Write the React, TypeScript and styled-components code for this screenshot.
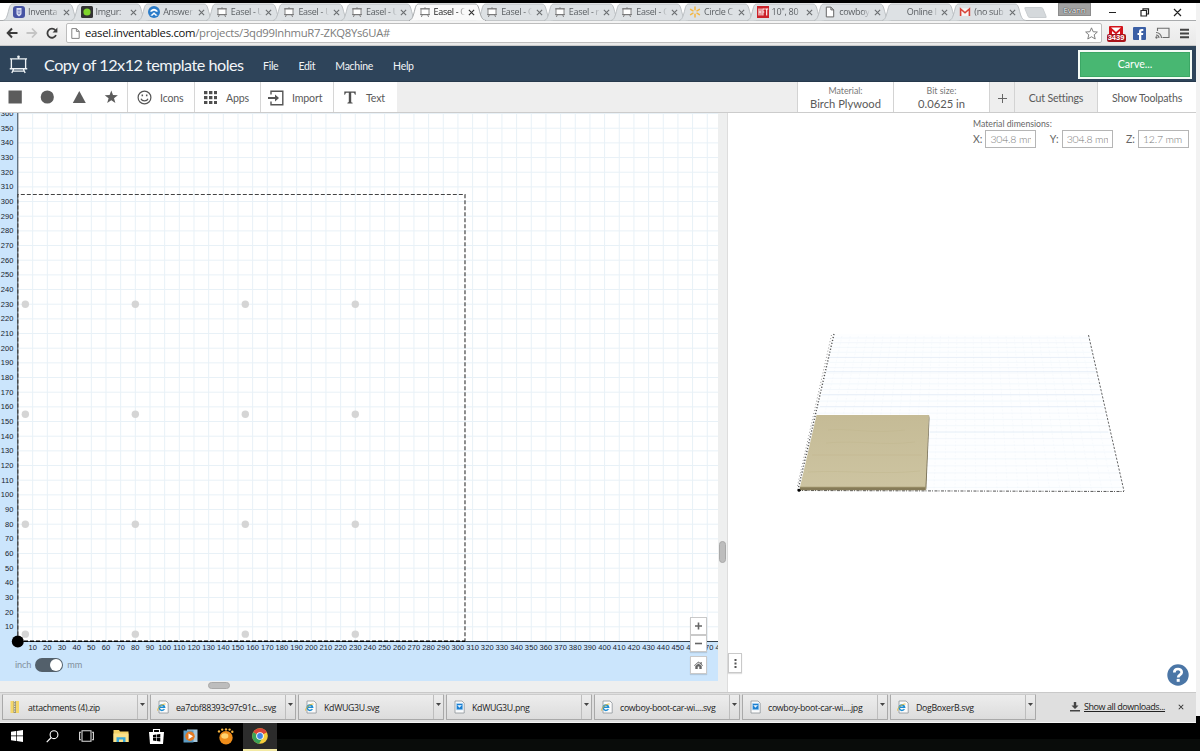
import React from "react";
import styled, { createGlobalStyle } from "styled-components";

const UI = '"Open Sans", "Noto Sans", sans-serif';
const LATO = 'Lato, "Open Sans", sans-serif';

const GlobalStyle = createGlobalStyle`
  * { box-sizing: border-box; }
  body { margin: 0; background: #000; font-family: ${LATO}; overflow: hidden; }
  svg { display: block; flex: none; }
  button { font: inherit; padding: 0; margin: 0; border: 0; background: none; color: inherit; }
`;

const Screen = styled.div`
  width: 1200px;
  height: 751px;
  padding-top: 9px;
  background: linear-gradient(#000 0 3px, #f2f2f2 3px 716px, #000 716px);
`;

const Window = styled.div`
  width: 1196px;
  height: 748px;
  display: flex;
  flex-direction: column;
  margin-top: -6px;
`;

/* ---------- browser chrome ---------- */

const TabStrip = styled.div`
  height: 18px;
  flex: none;
  display: flex;
  background: #fff;
  padding-left: 3px;
  border-bottom: 1px solid #a9abad;
`;

const Tab = styled.div<{ $active?: boolean }>`
  position: relative;
  z-index: ${(p) => (p.$active ? 2 : 1)};
  width: 67.6px;
  height: 18px;
  flex: none;
  display: flex;
  align-items: center;
  padding-left: 10px;
  color: ${(p) => (p.$active ? "#222" : "#5c6064")};
  font: ${(p) => (p.$active ? 500 : 400)} 9px/18px ${UI};
  letter-spacing: -0.3px;
`;

const TabShape = styled.svg`
  position: absolute;
  left: 0;
  top: 0;
  z-index: -1;
`;

const TabTitle = styled.span`
  width: 31px;
  margin-left: 3px;
  overflow: hidden;
  white-space: nowrap;
  mask-image: linear-gradient(90deg, #000 75%, transparent);
`;

const TabClose = styled.svg`
  margin-left: 3.5px;
`;

const NewTab = styled.div`
  width: 19px;
  height: 11px;
  margin: 4px 0 0 9px;
  background: #d5d9dc;
  border: 1px solid #c9cdd0;
  border-radius: 2px;
  transform: skewX(22deg);
`;

const WindowControls = styled.div`
  margin-left: auto;
  display: flex;
  align-items: flex-start;
`;

const UserBadge = styled.div`
  width: 33px;
  height: 13px;
  background: #a2a2a2;
  border: 1px solid #8c8c8c;
  color: #fff;
  font: 8px/11px ${UI};
  letter-spacing: -0.1px;
  text-align: center;
  text-shadow: 0 0 1px #222, 0 0 1px #222;
`;

const AddressBar = styled.div`
  height: 25px;
  flex: none;
  display: flex;
  align-items: center;
  background: linear-gradient(#f4f4f4, #e9e9e9);
  border-bottom: 1px solid #c9c9c9;
  padding: 0 6px 0 6px;
`;

const NavButtons = styled.div`
  display: flex;
  gap: 8px;
  width: 60px;
  align-items: center;
`;

const Omnibox = styled.div`
  flex: 1;
  height: 20px;
  display: flex;
  align-items: center;
  background: #fff;
  border: 1px solid #bdbdbd;
  border-radius: 2px;
  padding: 0 3px 0 4px;
`;

const Url = styled.span`
  flex: 1;
  margin-left: 5px;
  color: #7c7c7c;
  font: 11.3px/18px ${UI};
  letter-spacing: -0.29px;
  b { font-weight: 400; color: #111; }
`;

const Extensions = styled.div`
  display: flex;
  align-items: center;
  gap: 9px;
  padding-left: 4px;
`;

const MailExtension = styled.div`
  width: 20px;
  height: 17px;
  margin: 2px -2px 0 0;
  display: flex;
  flex-direction: column;
  align-items: center;
`;

const MailCount = styled.span`
  width: 19px;
  height: 8px;
  margin-top: -3px;
  border-radius: 2px;
  background: #a8131b;
  color: #fff;
  font: 700 7.5px/8px "Liberation Sans", sans-serif;
  text-align: center;
`;

/* ---------- application header ---------- */

const AppHeader = styled.header`
  height: 36px;
  flex: none;
  display: flex;
  align-items: center;
  background: #2e445a;
  border-bottom: 1px solid #26394c;
  color: #f2f5f8;
  padding: 1px 4px 0 9px;
`;

const ProjectTitle = styled.h1`
  margin: 1px 0 0 16px;
  width: 219px;
  white-space: nowrap;
  font: 400 16.2px/22px ${LATO};
  letter-spacing: -0.5px;
`;

const MenuBar = styled.nav`
  display: flex;
  gap: 20px;
  margin-top: 4px;
  font: 10.5px/14px ${LATO};
  letter-spacing: -0.27px;
`;

const CarveButton = styled.button`
  margin-left: auto;
  width: 114px;
  height: 29px;
  background: #48b772;
  border: 2px solid #f4fbf6;
  box-shadow: inset 0 0 0 1px #3ba765;
  color: #fff;
  font: 10.6px/25px ${LATO};
`;

const Toolbar = styled.div`
  height: 31px;
  flex: none;
  display: flex;
  background: #eee;
  border-bottom: 1px solid #ccc;
  color: #5a5a5a;
`;

const ShapeTools = styled.div`
  width: 127px;
  display: flex;
  align-items: center;
  gap: 18px;
  padding-left: 8px;
  background: #fff;
`;

const Tool = styled.button<{ $width: number; $inset: number; $gap: number }>`
  width: ${(p) => p.$width}px;
  display: flex;
  align-items: center;
  padding: 1px 0 0 ${(p) => p.$inset}px;
  gap: ${(p) => p.$gap}px;
  background: #fff;
  border-left: 1px solid #d6d6d6;
  font: 10.6px/14px ${LATO};
  letter-spacing: -0.15px;
`;

const ToolbarEnd = styled.div`
  display: flex;
  margin-left: auto;
`;

const Setting = styled.div<{ $width: number; $muted?: boolean }>`
  width: ${(p) => p.$width}px;
  display: flex;
  flex-direction: column;
  align-items: center;
  justify-content: center;
  padding-top: 2px;
  background: ${(p) => (p.$muted ? "#eee" : "#fff")};
  border-left: 1px solid #d3d3d3;
  font: 10.6px/13px ${LATO};
  letter-spacing: -0.2px;
  small { font-size: 8.8px; line-height: 12px; color: #777; letter-spacing: 0; }
  strong { font-weight: 400; font-size: 11.2px; line-height: 14px; letter-spacing: 0; }
`;

/* ---------- workspace ---------- */

const Workspace = styled.main`
  height: 579px;
  flex: none;
  display: flex;
`;

const Design = styled.section`
  position: relative;
  width: 728px;
  display: grid;
  grid-template-columns: 718px 10px;
  grid-template-rows: 568px 11px;
  background: #eeefef;
  border-right: 1px solid #ddd;
`;

const VerticalTrack = styled.div`
  padding: 428px 1px 0 1px;
`;

const HorizontalTrack = styled.div`
  padding: 1px 0 0 208px;
`;

const Thumb = styled.div<{ $w: number; $h: number }>`
  width: ${(p) => p.$w}px;
  height: ${(p) => p.$h}px;
  border-radius: 4px;
  background: #bdbdbd;
  border: 1px solid #a8a8a8;
`;

const RulerText = styled.text`
  font: 7.5px "Liberation Sans", sans-serif;
  letter-spacing: 0.1px;
  fill: #17232e;
`;

const UnitSwitch = styled.div`
  position: absolute;
  left: 15px;
  bottom: 20px;
  display: flex;
  align-items: center;
  gap: 4px;
  color: #83919d;
  font: 9.2px/14px ${LATO};
  letter-spacing: -0.15px;
`;

const Switch = styled.span`
  width: 28px;
  height: 14px;
  padding: 1px;
  border-radius: 7px;
  background: #53606b;
  display: flex;
  justify-content: flex-end;
  &::after {
    content: "";
    width: 12px;
    height: 12px;
    border-radius: 50%;
    background: #fff;
  }
`;

const ZoomControls = styled.div`
  position: absolute;
  left: 690px;
  top: 504px;
  display: flex;
  flex-direction: column;
`;

const SquareButton = styled.button<{ $gap?: number; $h?: number }>`
  width: 17px;
  height: ${(p) => p.$h ?? 17}px;
  margin-top: ${(p) => p.$gap ?? 0}px;
  display: flex;
  align-items: center;
  justify-content: center;
  background: #fff;
  border: 1px solid #c9c9c9;
  box-shadow: 0 1px 1px rgba(0, 0, 0, 0.12);
  color: #666;
`;

const Preview = styled.section`
  position: relative;
  flex: 1;
  background: #fff;
`;

const Dimensions = styled.div`
  height: 41px;
  padding: 5px 7px 0 245px;
  color: #666;
  font: 8.7px/12px ${LATO};
`;

const DimensionRow = styled.div`
  display: flex;
  justify-content: space-between;
`;

const Dimension = styled.label`
  display: flex;
  align-items: center;
  gap: 3px;
  font: 10.5px/17px ${LATO};
`;

const DimensionValue = styled.span`
  width: 51px;
  height: 18px;
  border: 1px solid #b5b5b5;
  padding: 0 4px;
  color: #777;
  font: 300 10.5px/17px ${LATO};
  letter-spacing: -0.2px;
  white-space: nowrap;
  background: #fff;
`;

const Clip = styled.span`
  display: block;
  overflow: hidden;
`;

const MoreButton = styled(SquareButton)`
  position: absolute;
  left: 0;
  top: 540px;
  width: 14px;
  height: 20px;
`;

const HelpButton = styled.button`
  position: absolute;
  right: 7px;
  top: 551px;
  width: 22px;
  height: 22px;
`;

/* ---------- downloads and taskbar ---------- */

const Downloads = styled.div`
  height: 31px;
  flex: none;
  display: flex;
  align-items: center;
  gap: 2px;
  padding: 0 0 1px 2px;
  background: #dfdfdf;
  border-top: 1px solid #c9c9c9;
  border-bottom: 1px solid #f4f4f4;
  color: #222;
  font: 8.8px/14px ${UI};
  letter-spacing: -0.32px;
`;

const Download = styled.div`
  width: 146px;
  height: 26px;
  display: flex;
  align-items: center;
  padding-left: 6px;
  background: linear-gradient(#ededed, #dcdcdc);
  border: 1px solid #a9a9a9;
  border-top-color: #ccc;
  border-radius: 1px;
`;

const FileName = styled.span`
  flex: 1;
  margin-left: 7px;
  padding-top: 1px;
  white-space: nowrap;
`;

const DownloadMenu = styled.span`
  width: 10px;
  height: 24px;
  padding: 8px 0 0 2px;
  border-left: 1px solid #bdbdbd;
`;

const ShowAll = styled.span`
  display: flex;
  align-items: center;
  gap: 4px;
  margin-left: 32px;
  width: 106px;
  white-space: nowrap;
  u { font-size: 9px; letter-spacing: -0.43px; }
`;

const Taskbar = styled.footer`
  width: 1200px;
  height: 29px;
  flex: none;
  display: flex;
  background: linear-gradient(#000 0 16px, #090c0a 16px);
`;

const TaskItem = styled.div<{ $active?: boolean }>`
  width: ${(p) => (p.$active ? 34.5 : 34.7)}px;
  height: 28px;
  display: flex;
  align-items: center;
  justify-content: center;
  background: ${(p) => (p.$active ? "#2c2c2c" : "#000")};
  border-bottom: 2px solid ${(p) => (p.$active ? "#f3eaa4" : "#000")};
`;

/* ---------- icons ---------- */

const EaselIcon = ({ size, color, weight = 1.4 }: { size: number; color: string; weight?: number }) => (
  <svg width={size} height={size} viewBox="0 0 20 20" fill="none" stroke={color} strokeWidth={weight}>
    <path d="M1 4H19M2.5 4V14.5H17.5V4M.8 14.5H19.2M5 14.5L3 19M15 14.5L17 19M4 17H16M10 4V1.5" />
    <circle cx="10" cy="1.8" r=".7" fill={color} />
  </svg>
);

const PageIcon = ({ width = 9, height = 11 }: { width?: number; height?: number }) => (
  <svg width={width} height={height} viewBox="0 0 9 11" fill="#fff" stroke="#777" strokeWidth=".9">
    <path d="M.8.6H5.4L8.2 3.4V10.4H.8ZM5.4.6V3.4H8.2" />
  </svg>
);

const CloseX = ({ size = 7, color = "#6b6e71" }: { size?: number; color?: string }) => (
  <svg width={size} height={size} viewBox="0 0 8 8" stroke={color} strokeWidth="1.4">
    <path d="M1 1L7 7M7 1L1 7" />
  </svg>
);

const favicons: Record<string, React.ReactNode> = {
  inventables: (
    <svg width="12" height="12" viewBox="0 0 12 12">
      <rect width="12" height="12" rx="3" fill="#4653a3" />
      <path d="M3.5 2H8.5V7.5C8.5 9 7 9.5 6 10.5C5 9.5 3.5 9 3.5 7.5Z" fill="#dfe4f6" />
      <path d="M4.5 4.3H7.5M4.5 6H7.5M4.8 7.7H7.2" stroke="#4653a3" strokeWidth=".7" />
    </svg>
  ),
  imgur: (
    <svg width="12" height="12" viewBox="0 0 12 12">
      <rect width="12" height="12" rx="1.5" fill="#333" />
      <circle cx="6" cy="6" r="3.6" fill="#7fd62c" />
    </svg>
  ),
  answers: (
    <svg width="12" height="12" viewBox="0 0 12 12">
      <circle cx="6" cy="6" r="6" fill="#2b7cc9" />
      <path d="M2 5.4C4 1.8 8 1.8 10 5.4L8 5.8C7 4.4 5 4.4 4 5.8ZM6 6.2L9.6 9.4L7.6 9.8L6 8.2L4.400 9.800L2.400 9.400Z" fill="#fff" />
    </svg>
  ),
  easel: (
    <svg width="12" height="12" viewBox="0 0 12 12" fill="#fff" stroke="#777" strokeWidth=".9">
      <path d="M2 2.8H10V8.6H2ZM1 8.6H11M3.4 8.6L2.4 11M8.6 8.6L9.6 11M1 2.8H11M6 2.8V1.2" />
    </svg>
  ),
  walmart: (
    <svg width="12" height="12" viewBox="0 0 12 12" stroke="#f4b63f" strokeWidth="1.5" strokeLinecap="round">
      <path d="M6 .9V3.8M6 8.2V11.1M1.6 3.4L4 4.8M10.4 3.4L8 4.8M1.6 8.6L4 7.2M10.4 8.6L8 7.2" />
    </svg>
  ),
  hft: (
    <svg width="12" height="12" viewBox="0 0 12 12">
      <rect width="12" height="12" fill="#cc2229" />
      <path d="M2 2.5V9.5M4 2.5V9.5M2 6H4M5.9 9.5V3H7.8M5.9 6H7.3M8.2 3H11.2M9.7 3V9.5" stroke="#fff" strokeWidth="1.1" fill="none" />
    </svg>
  ),
  page: <svg width="12" height="12" viewBox="-1.5 0 12 11" fill="#fff" stroke="#666"><path d="M.8.6H5.4L8.2 3.4V10.4H.8ZM5.4.6V3.4H8.2" /></svg>,
  none: <svg width="12" height="12" />,
  gmail: (
    <svg width="12" height="12" viewBox="0 0 12 12">
      <rect x="1" y="2.3" width="10" height="7.6" fill="#f6f6f6" />
      <path d="M1.6 10V3L6 6.8L10.4 3V10" fill="none" stroke="#d9453a" strokeWidth="1.6" />
    </svg>
  ),
};

const ShapeIcons = () => (
  <>
    <svg width="14" height="14" viewBox="0 0 14 14" fill="#5c5c5c"><path d="M.5.5H13.8V13.5H.5Z" /></svg>
    <svg width="14" height="14" viewBox="0 0 14 14" fill="#5c5c5c"><circle cx="7.3" cy="7" r="6.6" /></svg>
    <svg width="14" height="14" viewBox="0 0 14 14" fill="#5c5c5c"><path d="M7.3 1L13.8 13H.8Z" /></svg>
    <svg width="14" height="14" viewBox="0 0 14 14" fill="#5c5c5c">
      <path d="M7.3.4L9 5.1L13.9 5.2L10 8.3L11.4 13.1L7.3 10.3L3.2 13.1L4.6 8.3L.7 5.2L5.6 5.1Z" />
    </svg>
  </>
);

const SmileIcon = () => (
  <svg width="15" height="15" viewBox="0 0 15 15" fill="none" stroke="#555" strokeWidth="1.2">
    <circle cx="7.5" cy="7.5" r="6.4" />
    <path d="M4 8.7C5 11.6 10 11.6 11 8.7" />
    <path d="M5.3 4.5V6.3M9.7 4.5V6.3" strokeWidth="1.5" />
  </svg>
);

const AppsIcon = () => (
  <svg width="13" height="13" viewBox="0 0 13 13" fill="#4f4f4f">
    {[0, 5, 10].flatMap((y) => [0, 5, 10].map((x) => <rect key={`${x}-${y}`} x={x} y={y} width="3.4" height="3.2" />))}
  </svg>
);

const ImportIcon = () => (
  <svg width="16" height="16" viewBox="0 0 16 16" fill="none" stroke="#555" strokeWidth="1.4">
    <path d="M3 4.5V1.2H14.8V14.8H3V11.5" />
    <path d="M0 8H8" strokeWidth="2" />
    <path d="M7 4.4L11 8L7 11.6Z" fill="#555" stroke="none" />
  </svg>
);

const TypeIcon = () => (
  <svg width="12" height="13" viewBox="0 0 12 13" fill="#4f4f4f">
    <path d="M.3.6H11.7V3.8H10.9C10.6 2.2 10.1 1.8 8.8 1.8H7.2V10.6C7.2 11.5 7.6 11.7 8.6 11.8V12.5H3.4V11.8C4.4 11.7 4.8 11.5 4.8 10.6V1.8H3.2C1.9 1.8 1.4 2.2 1.1 3.8H.3Z" />
  </svg>
);

const FileIcon = ({ kind }: { kind: string }) => {
  if (kind === "zip")
    return (
      <svg width="12" height="14" viewBox="0 0 12 14">
        <path d="M1.5 1H10V13H1.5Z" fill="#f4d76c" />
        <path d="M4.5 1H7V13H4.5Z" fill="#9b9575" />
        <path d="M5.7 1V13" stroke="#eee" strokeDasharray="1.2 1.2" />
      </svg>
    );
  return (
    <svg width="12" height="14" viewBox="0 0 12 14">
      <path d="M2 1H9L11.2 3.2V13H2Z" fill="#fbfbfb" stroke="#8d9499" strokeWidth=".8" />
      {kind === "svg" ? (
        <>
          <path d="M7.3 9A2.7 2.7 0 1 1 7.6 7.2H2.7" fill="none" stroke="#1e8ed2" strokeWidth="1.5" />
          <path d="M.6 10.6C0 8 5.5 3.6 8.5 4" fill="none" stroke="#e3b72b" strokeWidth=".9" />
        </>
      ) : (
        <path d="M3.4 3.4H9.8V9.8H3.4ZM4.6 5.2L6.4 7.4L8.6 5.2" fill="#1b7fd0" stroke="#bfe0fa" strokeWidth=".6" />
      )}
    </svg>
  );
};

const TaskIcons: React.ReactNode[] = [
  <svg width="12" height="12" viewBox="0 0 12 12" fill="#fff">
    <path d="M0 1.8L5 1V5.6H0ZM5.7.9L12 0V5.6H5.7ZM0 6.3H5V11L0 10.2ZM5.7 6.3H12V12L5.7 11.1Z" />
  </svg>,
  <svg width="13" height="13" viewBox="0 0 13 13" fill="none" stroke="#fff" strokeWidth="1.1">
    <circle cx="8" cy="4.7" r="3.9" />
    <path d="M5.2 7.5L.7 12.2" />
  </svg>,
  <svg width="15" height="12" viewBox="0 0 15 12" fill="none" stroke="#ddd" strokeWidth="1.1">
    <path d="M3 .8H12V11.2H3ZM2 2.3H.6V9.7H2M13 2.3H14.4V9.7H13" />
  </svg>,
  <svg width="16" height="14" viewBox="0 0 16 14">
    <path d="M.5 1H6L7 2.5H15.5V13H.5Z" fill="#f2d167" />
    <path d="M.5 4.5H15.5V13H.5Z" fill="#fae28b" />
    <path d="M3.5 13V8.2H12.5V13H10V10.5H6V13Z" fill="#38a9dc" />
  </svg>,
  <svg width="15" height="16" viewBox="0 0 15 16">
    <path d="M4.5 4V1.5H10.5V4" fill="none" stroke="#fff" strokeWidth="1.1" />
    <path d="M0 4H15L14 16H1Z" fill="#fff" />
    <path d="M4 7L7 6.6V9.5H4ZM7.6 6.5L11.3 6V9.5H7.6ZM4 10.1H7V13L4 12.6ZM7.6 10.1H11.3V13.6L7.6 13.1Z" fill="#000" />
  </svg>,
  <svg width="15" height="14" viewBox="0 0 15 14">
    <path d="M4 .5H14.5V13H4Z" fill="#a9c9dc" />
    <path d="M.5 1.5H10.5V13.5H.5Z" fill="#5c9cc4" />
    <circle cx="7" cy="7.3" r="4.7" fill="#e47a23" />
    <path d="M5.5 4.4L10 7.3L5.5 10.2Z" fill="#fff" />
  </svg>,
  <svg width="17" height="17" viewBox="0 0 17 17">
    <circle cx="9" cy="9.7" r="6.7" fill="#ef8d1a" />
    <ellipse cx="7.8" cy="8" rx="3.6" ry="2.8" fill="#ffd36f" />
    <g fill="#f7b540">
      <circle cx="2" cy="3.4" r="1.2" /><circle cx="5.2" cy="1.6" r="1.2" />
      <circle cx="9" cy="1.4" r="1.2" /><circle cx="12.6" cy="1.6" r="1.2" /><circle cx="15.3" cy="3.8" r="1.2" />
    </g>
  </svg>,
  <svg width="16" height="16" viewBox="0 0 16 16">
    <circle cx="8" cy="8" r="7.8" fill="#f7cf3b" />
    <path d="M8 8L1.2 4.2A7.8 7.8 0 0 1 14.9 4.3Z" fill="#dc4538" />
    <path d="M8 8L1.2 4.2A7.8 7.8 0 0 0 7 15.7L10.6 10Z" fill="#3aa257" />
    <circle cx="8" cy="8" r="3.8" fill="#fff" />
    <circle cx="8" cy="8" r="2.9" fill="#4285e4" />
  </svg>,
];

/* ---------- data ---------- */

const tabs: [string, string][] = [
  ["inventables", "Inventa"],
  ["imgur", "Imgur: "],
  ["answers", "Answer"],
  ["easel", "Easel - U"],
  ["easel", "Easel - U"],
  ["easel", "Easel - U"],
  ["easel", "Easel - C"],
  ["easel", "Easel - C"],
  ["easel", "Easel - r"],
  ["easel", "Easel - C"],
  ["walmart", "Circle C"],
  ["hft", "10\", 80"],
  ["page", "cowboy"],
  ["none", "Online I"],
  ["gmail", "(no sub"],
];

const downloads: [string, string][] = [
  ["zip", "attachments (4).zip"],
  ["svg", "ea7cbf88393c97c91c....svg"],
  ["svg", "KdWUG3U.svg"],
  ["png", "KdWUG3U.png"],
  ["svg", "cowboy-boot-car-wi....svg"],
  ["png", "cowboy-boot-car-wi....jpg"],
  ["svg", "DogBoxerB.svg"],
];

const SCALE = 1.4665;
const ORIGIN_X = 18;
const ORIGIN_Y = 528.5;
const mmX = (mm: number) => ORIGIN_X + mm * SCALE;
const mmY = (mm: number) => ORIGIN_Y - mm * SCALE;
const steps = (count: number) => Array.from({ length: count }, (_, i) => (i + 1) * 10);
const holes = [5, 80, 155, 230];

const DesignCanvas = () => (
  <svg width="718" height="568" viewBox="0 0 718 568">
    <rect width="718" height="568" fill="#cbe5fc" />
    <rect x={ORIGIN_X} width="700" height={ORIGIN_Y} fill="#fff" />
    <g stroke="#e8f1f7" strokeWidth="1">
      {steps(47).map((mm) => <path key={mm} d={`M${mmX(mm)} 0V${ORIGIN_Y}`} />)}
      {steps(36).map((mm) => <path key={mm} d={`M${ORIGIN_X} ${mmY(mm)}H718`} />)}
    </g>
    {steps(36).map((mm) => <RulerText key={mm} x="13.6" y={mmY(mm) + 2.5} textAnchor="end">{mm}</RulerText>)}
    {steps(48).map((mm) => <RulerText key={mm} x={mmX(mm)} y="537.3" textAnchor="middle">{mm}</RulerText>)}
    {holes.flatMap((x) => holes.map((y) => <circle key={`${x}-${y}`} cx={mmX(x)} cy={mmY(y)} r="3.7" fill="#d5d5d5" />))}
    <path d="M17.8 0V528.5H718" fill="none" stroke="#34424e" strokeWidth="1" />
    <path d={`M17.8 ${ORIGIN_Y}V${mmY(304.8)}H${mmX(304.8)}V${ORIGIN_Y}`} fill="none" stroke="#444" strokeWidth="1.2" strokeDasharray="4 2" />
    <path d="M18 528.3H465" stroke="#000" strokeWidth="1.4" strokeDasharray="4 2" />
    <circle cx="17.8" cy="528.5" r="6" fill="#000" />
  </svg>
);

const BoardPreview = () => (
  <svg width="468" height="538" viewBox="728 154 468 538">
    <defs>
      <linearGradient id="wood" x1="0" y1="0" x2="0" y2="1">
        <stop offset="0" stopColor="#c5bb96" />
        <stop offset="1" stopColor="#cdc4a1" />
      </linearGradient>
    </defs>
    <path d="M834 334L1089 335L1124 491L798 490Z" fill="#fdfeff" />
    <g stroke="#eaf2f8" strokeWidth=".5">
      {Array.from({ length: 26 }, (_, i) => {
        const y = 338 + i * 4.6 + i * i * 0.055;
        const t = (y - 334) / 156;
        return <path key={i} d={`M${834 - 36 * t} ${y}H${1089 + 35 * t}`} />;
      })}
      {Array.from({ length: 30 }, (_, i) => (
        <path key={i} d={`M${842 + i * 8.2} 336L${808 + i * 10.5} 490`} strokeOpacity=".55" strokeDasharray="2 1.5" />
      ))}
    </g>
    <path d="M829 357.500H1092M820 406.500H1103M930 432H1108M826 371.500H1096M822 394.500H1100" stroke="#e0e9f5" strokeWidth=".6" />
    <path d="M834 334L798 490" stroke="#555" strokeWidth="1.400" strokeDasharray="1.2 1.8" fill="none" />
    <path d="M831.500 335L797 488" stroke="#999" strokeWidth="1" strokeDasharray="1 2.200" fill="none" />
    <path d="M1088.500 335L1124 491" stroke="#555" strokeWidth=".9" strokeDasharray="2.200 1.500" fill="none" />
    <path d="M798 490.500L1124 491.500" stroke="#555" strokeWidth="1" strokeDasharray="3 1 1 1.500" fill="none" />
    <path d="M816.500 415H929L926 487H800Z" fill="url(#wood)" />
    <path d="M828 430C850 428 870 434 905 430M812 455H922M826 443C860 440 880 446 915 442M808 472C850 470 880 475 920 471" stroke="#c0b68f" strokeWidth=".5" fill="none" />
    <path d="M929 415L929.500 418L926.300 490L925.500 487Z" fill="#746b50" />
    <path d="M800 487H925.800V490.300H799.500Z" fill="#867b58" />
    <path d="M800 487.200H925.800" stroke="#a3986f" strokeWidth=".8" />
    <circle cx="799" cy="490.300" r="1.500" fill="#000" />
  </svg>
);

const BrowserTab = ({ icon, title, active }: { icon: string; title: string; active: boolean }) => (
  <Tab $active={active}>
    <TabShape width="77" height="18" viewBox="0 0 77 18">
      <path
        d="M0 17.500C3 17 4 14 6 6C7 2 8 1 10 1H66C68.500 1 69 3 70 6C72 14 73 17 77 17.500"
        fill={active ? "#fafafa" : "#dde1e4"}
        stroke={active ? "#9b9ea0" : "#b6babd"}
        strokeWidth=".9"
      />
      {active && <path d="M1 17.800H76" stroke="#fafafa" />}
    </TabShape>
    {favicons[icon]}
    <TabTitle>{title}</TabTitle>
    <TabClose width="7" height="7" viewBox="0 0 8 8" stroke={active ? "#333" : "#6b6e71"} strokeWidth="1.300">
      <path d="M1 1L7 7M7 1L1 7" />
    </TabClose>
  </Tab>
);

export default function App() {
  return (
    <Screen>
      <GlobalStyle />
      <Window>
        <TabStrip>
          {tabs.map(([icon, title], i) => <BrowserTab key={i} icon={icon} title={title} active={i === 6} />)}
          <NewTab />
          <WindowControls>
            <UserBadge>Evann</UserBadge>
            <svg width="105" height="18" viewBox="0 0 105 18" fill="none" stroke="#222" strokeWidth="1.200">
              <path d="M18 9.500H25M50 7.500H55.500V13H50ZM52 7.500V5.800H57.500V11H55.500M83 6L90 13M90 6L83 13" />
            </svg>
          </WindowControls>
        </TabStrip>
        <AddressBar>
          <NavButtons>
            <svg width="12" height="12" viewBox="0 0 12 12" fill="none" stroke="#3c3c3c" strokeWidth="2"><path d="M11.500 6H2M6 1.500L1.700 6L6 10.500" /></svg>
            <svg width="12" height="12" viewBox="0 0 12 12" fill="none" stroke="#c4c4c4" strokeWidth="1.800"><path d="M.5 6H10M6 1.500L10.300 6L6 10.500" /></svg>
            <svg width="12" height="12" viewBox="0 0 12 12" fill="none" stroke="#3c3c3c" strokeWidth="1.800"><path d="M10 8.200A4.500 4.500 0 1 1 9.300 3.200" /><path d="M11.400.6V5.400H6.600Z" fill="#3c3c3c" stroke="none" /></svg>
          </NavButtons>
          <Omnibox>
            <PageIcon />
            <Url><b>easel.inventables.com</b>/projects/3qd99lnhmuR7-ZKQ8Ys6UA#</Url>
            <svg width="13" height="13" viewBox="0 0 14 14" fill="#fff" stroke="#777" strokeWidth="1">
              <path d="M7 .9L8.800 5.100L13.300 5.400L9.900 8.400L11 12.900L7 10.500L3 12.900L4.100 8.400L.7 5.400L5.200 5.100Z" />
            </svg>
          </Omnibox>
          <Extensions>
            <MailExtension>
              <svg width="14" height="11" viewBox="0 0 14 11">
                <rect width="14" height="11" rx="1" fill="#d3141b" />
                <path d="M2 1.500H12L7 6Z" fill="#fff" /><path d="M3 5V10H11V5L7 8.500Z" fill="#fff" />
              </svg>
              <MailCount>3439</MailCount>
            </MailExtension>
            <svg width="13" height="13" viewBox="0 0 13 13">
              <rect width="13" height="13" rx="1" fill="#3b5fa5" />
              <path d="M6 13V8H4.500V6H6V4.600C6 2.800 7 2 8.800 2H10.300V4H9.200C8.500 4 8.300 4.300 8.300 4.900V6H10.300L10 8H8.300V13Z" fill="#fff" />
            </svg>
            <svg width="15" height="12" viewBox="0 0 15 12" fill="none" stroke="#6c6c6c" strokeWidth="1.100">
              <path d="M2.500 4V1.200H14V10.500H7.500M1 5.500A5.500 5.500 0 0 1 6.500 11M1 8A3 3 0 0 1 4 11" /><circle cx="1.500" cy="10.500" r=".6" />
            </svg>
            <svg width="11" height="11" viewBox="0 0 11 11" stroke="#444" strokeWidth="2"><path d="M1 1.800H10M1 5.500H10M1 9.200H10" /></svg>
          </Extensions>
        </AddressBar>
        <AppHeader>
          <EaselIcon size={19} color="#eef3f6" />
          <ProjectTitle>Copy of 12x12 template holes</ProjectTitle>
          <MenuBar><span>File</span><span>Edit</span><span>Machine</span><span>Help</span></MenuBar>
          <CarveButton>Carve...</CarveButton>
        </AppHeader>
        <Toolbar>
          <ShapeTools><ShapeIcons /></ShapeTools>
          <Tool $width={67} $inset={9} $gap={8}><SmileIcon />Icons</Tool>
          <Tool $width={66} $inset={9} $gap={9}><AppsIcon />Apps</Tool>
          <Tool $width={73} $inset={7} $gap={8}><ImportIcon />Import</Tool>
          <Tool $width={64} $inset={10} $gap={10}><TypeIcon />Text</Tool>
          <ToolbarEnd>
            <Setting $width={96}><small>Material:</small><strong>Birch Plywood</strong></Setting>
            <Setting $width={96}><small>Bit size:</small><strong>0.0625 in</strong></Setting>
            <Setting $width={25} $muted>
              <svg width="9" height="9" viewBox="0 0 9 9" stroke="#666"><path d="M4.500 0V9M0 4.500H9" /></svg>
            </Setting>
            <Setting $width={83} $muted>Cut Settings</Setting>
            <Setting $width={99}>Show Toolpaths</Setting>
          </ToolbarEnd>
        </Toolbar>
        <Workspace>
          <Design>
            <DesignCanvas />
            <VerticalTrack><Thumb $w={7} $h={22} /></VerticalTrack>
            <HorizontalTrack><Thumb $w={22} $h={7} /></HorizontalTrack>
            <UnitSwitch>inch<Switch />mm</UnitSwitch>
            <ZoomControls>
              <SquareButton $h={18}>
                <svg width="7" height="8" viewBox="0 0 7 8" stroke="#666" strokeWidth="1.600"><path d="M3.500 .5V7.500M0 4H7" /></svg>
              </SquareButton>
              <SquareButton>
                <svg width="7" height="8" viewBox="0 0 7 8" stroke="#666" strokeWidth="1.600"><path d="M0 3.500H7" /></svg>
              </SquareButton>
              <SquareButton $gap={4} $h={18}>
                <svg width="9" height="8" viewBox="0 0 9 8" fill="#666"><path d="M4.500.4L6.500 2.200V1H7.700V3.300L9 4.500L8.500 5L4.500 1.600L.5 5L0 4.500ZM4.500 2.400L7.700 5.100V8H5.300V5.500H3.700V8H1.300V5.100Z" /></svg>
              </SquareButton>
            </ZoomControls>
          </Design>
          <Preview>
            <Dimensions>
              Material dimensions:
              <DimensionRow>
                <Dimension>X:<DimensionValue><Clip>304.8 mm</Clip></DimensionValue></Dimension>
                <Dimension>Y:<DimensionValue><Clip>304.8 mm</Clip></DimensionValue></Dimension>
                <Dimension>Z:<DimensionValue><Clip>12.7 mm</Clip></DimensionValue></Dimension>
              </DimensionRow>
            </Dimensions>
            <BoardPreview />
            <MoreButton>
              <svg width="3" height="9" viewBox="0 0 3 9" fill="#555"><path d="M.5 0H2.500V2H.5ZM.5 3.500H2.500V5.500H.5ZM.5 7H2.500V9H.5Z" /></svg>
            </MoreButton>
            <HelpButton aria-label="Help">
              <svg width="22" height="22" viewBox="0 0 22 22">
                <circle cx="11" cy="11" r="10.700" fill="#4b76a6" />
                <path d="M7.300 8.500C7.300 3.800 14.700 4 14.700 8.200C14.700 11 11.200 10.800 11.200 13.500" fill="none" stroke="#fff" strokeWidth="2.700" />
                <rect x="9.700" y="14.900" width="3" height="2.900" fill="#fff" />
              </svg>
            </HelpButton>
          </Preview>
        </Workspace>
        <Downloads>
          {downloads.map(([kind, name]) => (
            <Download key={name}>
              <FileIcon kind={kind} />
              <FileName>{name}</FileName>
              <DownloadMenu><svg width="5" height="3" viewBox="0 0 5 3" fill="#444"><path d="M0 0H5L2.500 3Z" /></svg></DownloadMenu>
            </Download>
          ))}
          <ShowAll>
            <svg width="10" height="10" viewBox="0 0 10 10" fill="#444"><path d="M3.800 0H6.200V3.500H8.500L5 7L1.500 3.500H3.800ZM0 8H10V9.500H0Z" /></svg>
            <u>Show all downloads...</u>
          </ShowAll>
          <CloseX size={6} color="#333" />
        </Downloads>
        <Taskbar>
          {TaskIcons.map((icon, i) => <TaskItem key={i} $active={i === 7}>{icon}</TaskItem>)}
        </Taskbar>
      </Window>
    </Screen>
  );
}
